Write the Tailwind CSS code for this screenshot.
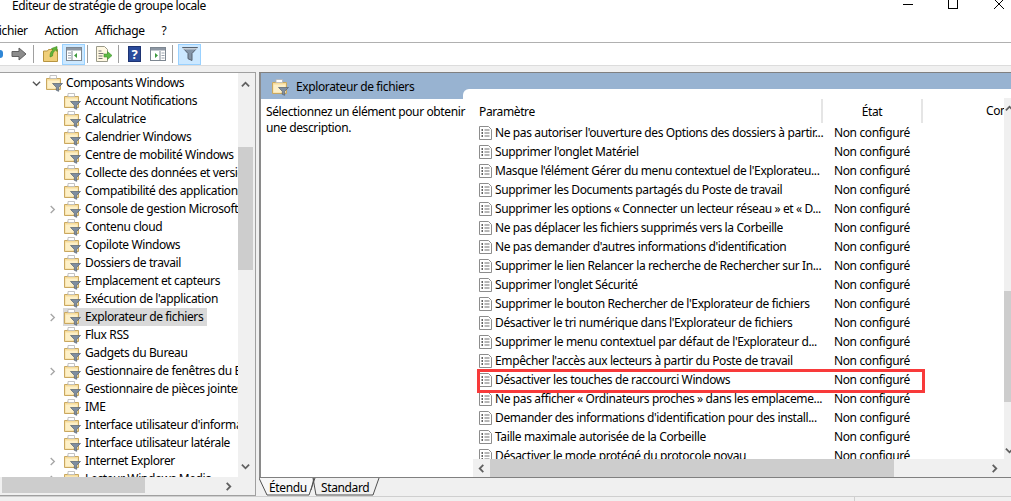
<!DOCTYPE html>
<html lang="fr"><head><meta charset="utf-8"><script src="https://cdn.jsdelivr.net/npm/@tailwindcss/browser@4"></script><title>Éditeur de stratégie de groupe locale</title></head>
<body class="relative w-[1011px] h-[501px] overflow-hidden bg-white font-['Noto_Sans',sans-serif] text-[12px] text-black tracking-[-0.38px]">
<svg class="hidden"><defs>
<symbol id="ff" viewBox="0 0 18 18"><path d="M1.500 4.500h3l1-1.500h5l1 1.500h4v11h-14z" fill="#f7dc9a" stroke="#c9a860"/><path d="M2.500 6.500h12v8h-12z" fill="#fdf0c8"/><path d="M5 1.500h6.500v3h-6.500z" fill="#fff" stroke="#b5b5b5" stroke-width=".8"/><path d="M7.500 9.500h10l-3.800 3.800v4l-2.400-1v-3z" fill="#7f8ea0" stroke="#56616f" stroke-width=".7"/></symbol>
<symbol id="doc" viewBox="0 0 13 14"><path d="M.5.500h9l3 3v10h-12z" fill="#fff" stroke="#8d8d8d"/><path d="M2.500 4h1.500M2.500 7h1.500M2.500 10h1.500" stroke="#2f2f2f" stroke-width="1.500"/><path d="M5.500 4h5M5.500 7h5M5.500 10h5" stroke="#6f6f6f"/></symbol>
<symbol id="cr" viewBox="0 0 10 10"><path d="M3 1l4 4-4 4" fill="none" stroke="#a6a6a6" stroke-width="1.500"/></symbol>
<symbol id="sb" viewBox="0 0 10 10"><path d="M1 7l4-4 4 4" fill="none" stroke="#606060" stroke-width="2"/></symbol>
</defs></svg>

<header class="h-[20px] relative">
  <div class="h-[11px] flex items-center pl-[12px]">
    <span class="whitespace-nowrap">Éditeur de stratégie de groupe locale</span>
    <div class="ml-auto flex items-center h-[11px]">
      <span class="w-[10px] h-px bg-black mr-[35px] -mt-[2px]"></span>
      <span class="w-[10px] h-[14px] border border-black -mt-[7px] mr-[36px]"></span>
      <svg class="w-[10px] h-[10px] mr-[7px] -mt-[3px]" viewBox="0 0 10 10"><path d="M0 0l10 10M10 0l-10 10" stroke="#000"/></svg>
    </div>
  </div>
</header>

<nav class="h-[23px] flex items-center gap-[17px] -ml-[7px] border-b border-[#b0b0b0]"><span>Fichier</span><span>Action</span><span>Affichage</span><span>?</span></nav>

<div class="h-[23px] flex items-center border-b border-[#dcdcdc]">
  <div class="w-[3px] h-[8px] bg-[#2f86d6] rounded-r-full ml-0 mr-[8px]"></div>
  <svg class="w-[16px] h-[14px] mr-[6px]" viewBox="0 0 16 14"><path d="M1 4.500h7v-3.500l7 6-7 6v-3.500h-7z" fill="#8c8c8c" stroke="#5f5f5f"/></svg>
  <span class="w-px h-[18px] bg-[#a0a0a0] mr-[9px]"></span>
  <svg class="w-[15px] h-[16px] mr-[4px]" viewBox="0 0 15 16"><path d="M.5 5h4l1-1.500h9v12h-14z" fill="#f0cf79" stroke="#b79440"/><path d="M7 11c0-4 1-6 3-7l-1.500-1.500 5.500-2v5l-1.500-1.500c-1.500 1-3 3-3 6z" fill="#61b53a" stroke="#3f8a25" stroke-width=".6"/></svg>
  <div class="w-[23px] h-[21px] bg-[#cce8ff] border border-[#99d1ff] flex items-center justify-center mr-[2px]">
    <svg class="w-[16px] h-[14px]" viewBox="0 0 16 14"><rect x=".5" y=".5" width="15" height="13" fill="#fff" stroke="#7d8791"/><path d="M1 1h14v2.500h-14z" fill="#8d97a3"/><path d="M6 4v9" stroke="#7d8791"/><path d="M2 6h3M2 8.500h3M2 11h3" stroke="#9aa3ad"/><path d="M11 6v5l-3-2.500z" fill="#3d9a3d"/></svg>
  </div>
  <span class="w-px h-[18px] bg-[#a0a0a0] mr-[8px]"></span>
  <svg class="w-[16px] h-[16px] mr-[6px]" viewBox="0 0 16 16"><path d="M.5.500h8l3 3v12h-11z" fill="#fff8e2" stroke="#9a9a8a"/><path d="M2.500 5h3M2.500 7.500h5M2.500 10h4M2.500 12.500h4" stroke="#777"/><path d="M8 8h3.500v-2.500l4.500 4-4.500 4v-2.500h-3.500z" fill="#5dbb46" stroke="#3f8f2c" stroke-width=".6"/></svg>
  <span class="w-px h-[18px] bg-[#a0a0a0] mr-[9px]"></span>
  <div class="w-[13px] h-[16px] bg-[#2a4b9b] border border-[#1d3372] text-white text-[13px] font-bold leading-[14px] text-center mr-[9px] tracking-normal">?</div>
  <svg class="w-[16px] h-[14px] mr-[6px]" viewBox="0 0 16 14"><rect x=".5" y=".5" width="15" height="13" fill="#fff" stroke="#7d8791"/><path d="M1 1h14v2.500h-14z" fill="#8d97a3"/><path d="M10 4v9" stroke="#7d8791"/><path d="M11.500 6h3M11.500 8.500h3M11.500 11h3" stroke="#9aa3ad"/><path d="M5 6v5l3-2.500z" fill="#3d9a3d"/></svg>
  <span class="w-px h-[18px] bg-[#a0a0a0] mr-[5px]"></span>
  <div class="w-[23px] h-[21px] bg-[#cce8ff] border border-[#99d1ff] flex items-center justify-center">
    <svg class="w-[16px] h-[16px]" viewBox="0 0 16 16"><path d="M.5 1.500h15l-5.500 6v7l-4-1.800v-5.200z" fill="#8494a6" stroke="#56616f"/><path d="M1 2h14v1.500h-14z" fill="#c5ced8"/></svg>
  </div>
</div>

<div class="h-[6px] bg-[#f0f0f0]"></div>

<main class="h-[424px] bg-[#f0f0f0] flex">
  <section class="w-[256px] h-[424px] border-t border-r border-b border-[#a0a0a0] flex flex-col shrink-0">
    <div class="flex h-[404px]">
      <ul class="w-[238px] bg-white overflow-hidden pt-px leading-[18px] whitespace-nowrap">
        <li class="h-[18px] flex items-center pl-[32px]"><svg class="w-[9px] h-[9px] mr-[4px]" viewBox="0 0 10 10"><path d="M1 3l4 4 4-4" fill="none" stroke="#555" stroke-width="1.500"/></svg><svg class="w-[18px] h-[18px] mr-[3px]"><use href="#ff"/></svg>Composants Windows</li>
        <li class="h-[18px] flex items-center pl-[63px]"><svg class="w-[18px] h-[18px] mr-[4px] shrink-0"><use href="#ff"/></svg>Account Notifications</li>
        <li class="h-[18px] flex items-center pl-[63px]"><svg class="w-[18px] h-[18px] mr-[4px] shrink-0"><use href="#ff"/></svg>Calculatrice</li>
        <li class="h-[18px] flex items-center pl-[63px]"><svg class="w-[18px] h-[18px] mr-[4px] shrink-0"><use href="#ff"/></svg>Calendrier Windows</li>
        <li class="h-[18px] flex items-center pl-[63px]"><svg class="w-[18px] h-[18px] mr-[4px] shrink-0"><use href="#ff"/></svg>Centre de mobilité Windows</li>
        <li class="h-[18px] flex items-center pl-[63px]"><svg class="w-[18px] h-[18px] mr-[4px] shrink-0"><use href="#ff"/></svg>Collecte des données et versions</li>
        <li class="h-[18px] flex items-center pl-[63px]"><svg class="w-[18px] h-[18px] mr-[4px] shrink-0"><use href="#ff"/></svg>Compatibilité des applications</li>
        <li class="h-[18px] flex items-center pl-[48px]"><svg class="w-[9px] h-[9px] mr-[6px] shrink-0"><use href="#cr"/></svg><svg class="w-[18px] h-[18px] mr-[4px] shrink-0"><use href="#ff"/></svg>Console de gestion Microsoft</li>
        <li class="h-[18px] flex items-center pl-[63px]"><svg class="w-[18px] h-[18px] mr-[4px] shrink-0"><use href="#ff"/></svg>Contenu cloud</li>
        <li class="h-[18px] flex items-center pl-[63px]"><svg class="w-[18px] h-[18px] mr-[4px] shrink-0"><use href="#ff"/></svg>Copilote Windows</li>
        <li class="h-[18px] flex items-center pl-[63px]"><svg class="w-[18px] h-[18px] mr-[4px] shrink-0"><use href="#ff"/></svg>Dossiers de travail</li>
        <li class="h-[18px] flex items-center pl-[63px]"><svg class="w-[18px] h-[18px] mr-[4px] shrink-0"><use href="#ff"/></svg>Emplacement et capteurs</li>
        <li class="h-[18px] flex items-center pl-[63px]"><svg class="w-[18px] h-[18px] mr-[4px] shrink-0"><use href="#ff"/></svg>Exécution de l'application</li>
        <li class="h-[18px] flex items-center pl-[48px]"><svg class="w-[9px] h-[9px] mr-[6px] shrink-0"><use href="#cr"/></svg><svg class="w-[18px] h-[18px] shrink-0 bg-[#d9d9d9]"><use href="#ff"/></svg><span class="bg-[#d9d9d9] pl-[4px] pr-[4px] h-[18px]">Explorateur de fichiers</span></li>
        <li class="h-[18px] flex items-center pl-[63px]"><svg class="w-[18px] h-[18px] mr-[4px] shrink-0"><use href="#ff"/></svg>Flux RSS</li>
        <li class="h-[18px] flex items-center pl-[63px]"><svg class="w-[18px] h-[18px] mr-[4px] shrink-0"><use href="#ff"/></svg>Gadgets du Bureau</li>
        <li class="h-[18px] flex items-center pl-[48px]"><svg class="w-[9px] h-[9px] mr-[6px] shrink-0"><use href="#cr"/></svg><svg class="w-[18px] h-[18px] mr-[4px] shrink-0"><use href="#ff"/></svg>Gestionnaire de fenêtres du Bureau</li>
        <li class="h-[18px] flex items-center pl-[63px]"><svg class="w-[18px] h-[18px] mr-[4px] shrink-0"><use href="#ff"/></svg>Gestionnaire de pièces jointes</li>
        <li class="h-[18px] flex items-center pl-[63px]"><svg class="w-[18px] h-[18px] mr-[4px] shrink-0"><use href="#ff"/></svg>IME</li>
        <li class="h-[18px] flex items-center pl-[63px]"><svg class="w-[18px] h-[18px] mr-[4px] shrink-0"><use href="#ff"/></svg>Interface utilisateur d'information</li>
        <li class="h-[18px] flex items-center pl-[63px]"><svg class="w-[18px] h-[18px] mr-[4px] shrink-0"><use href="#ff"/></svg>Interface utilisateur latérale</li>
        <li class="h-[18px] flex items-center pl-[48px]"><svg class="w-[9px] h-[9px] mr-[6px] shrink-0"><use href="#cr"/></svg><svg class="w-[18px] h-[18px] mr-[4px] shrink-0"><use href="#ff"/></svg>Internet Explorer</li>
        <li class="h-[18px] flex items-center pl-[48px]"><svg class="w-[9px] h-[9px] mr-[6px] shrink-0"><use href="#cr"/></svg><svg class="w-[18px] h-[18px] mr-[4px] shrink-0"><use href="#ff"/></svg>Lecteur Windows Media</li>
      </ul>
      <div class="w-[17px] flex flex-col items-center pt-[7px] relative">
        <svg class="w-[9px] h-[9px] mr-[2px]"><use href="#sb"/></svg>
        <div class="w-[15px] h-[123px] bg-[#cdcdcd] mt-[58px] mr-[2px]"></div>
        <svg class="w-[9px] h-[9px] mr-[2px] rotate-180 mt-[192px]"><use href="#sb"/></svg>
      </div>
    </div>
    <div class="h-[18px] flex items-center">
      <div class="w-[143px] h-[16px] self-start ml-[2px] bg-[#cdcdcd]"></div>
      <svg class="w-[9px] h-[9px] ml-[79px] rotate-90"><use href="#sb"/></svg>
    </div>
  </section>

  <div class="w-[3px] shrink-0"></div>

  <section class="flex-1 min-w-0 h-[424px] flex flex-col relative">
    <div class="h-px bg-[#808080]"></div>
    <div class="h-[404px] flex border-l-2 border-[#8a8a8a]">
      <div class="w-[202px] shrink-0 bg-white">
        <div class="h-[26px] bg-[#98b3d1] flex items-center pl-[10px] pt-px"><svg class="w-[18px] h-[18px] mr-[7px]"><use href="#ff"/></svg>Explorateur de fichiers</div>
        <p class="pl-[5px] pt-[5px] leading-[16px] w-[205px] relative">Sélectionnez un élément pour obtenir une description.</p>
      </div>
      <div class="flex-1 min-w-0 bg-[#98b3d1] pt-[16px] flex flex-col">
        <div class="flex-1 bg-white rounded-tl-[6px] flex flex-col min-h-0">
          <div class="flex h-[370px] min-h-0">
            <div class="flex-1 min-w-0 pt-[10px] overflow-hidden">
              <div class="flex h-[24px] items-center">
                <span class="w-[360px] pl-[16px] border-r-2 border-[#e5e5e5] h-[24px] leading-[25px] shrink-0">Paramètre</span>
                <span class="w-[100px] text-center border-r-2 border-[#e5e5e5] h-[24px] leading-[25px] shrink-0">État</span>
                <span class="pl-[63px] shrink-0 whitespace-nowrap">Commentaire</span>
              </div>
              <ul class="whitespace-nowrap">
                <li class="h-[19px] flex items-center pl-[16px]"><svg class="w-[13px] h-[14px] mr-[3px] shrink-0"><use href="#doc"/></svg><span class="w-[339px] shrink-0">Ne pas autoriser l'ouverture des Options des dossiers à partir...</span>Non configuré</li>
                <li class="h-[19px] flex items-center pl-[16px]"><svg class="w-[13px] h-[14px] mr-[3px] shrink-0"><use href="#doc"/></svg><span class="w-[339px] shrink-0">Supprimer l'onglet Matériel</span>Non configuré</li>
                <li class="h-[19px] flex items-center pl-[16px]"><svg class="w-[13px] h-[14px] mr-[3px] shrink-0"><use href="#doc"/></svg><span class="w-[339px] shrink-0">Masque l'élément Gérer du menu contextuel de l'Explorateu...</span>Non configuré</li>
                <li class="h-[19px] flex items-center pl-[16px]"><svg class="w-[13px] h-[14px] mr-[3px] shrink-0"><use href="#doc"/></svg><span class="w-[339px] shrink-0">Supprimer les Documents partagés du Poste de travail</span>Non configuré</li>
                <li class="h-[19px] flex items-center pl-[16px]"><svg class="w-[13px] h-[14px] mr-[3px] shrink-0"><use href="#doc"/></svg><span class="w-[339px] shrink-0">Supprimer les options « Connecter un lecteur réseau » et « D...</span>Non configuré</li>
                <li class="h-[19px] flex items-center pl-[16px]"><svg class="w-[13px] h-[14px] mr-[3px] shrink-0"><use href="#doc"/></svg><span class="w-[339px] shrink-0">Ne pas déplacer les fichiers supprimés vers la Corbeille</span>Non configuré</li>
                <li class="h-[19px] flex items-center pl-[16px]"><svg class="w-[13px] h-[14px] mr-[3px] shrink-0"><use href="#doc"/></svg><span class="w-[339px] shrink-0">Ne pas demander d'autres informations d'identification</span>Non configuré</li>
                <li class="h-[19px] flex items-center pl-[16px]"><svg class="w-[13px] h-[14px] mr-[3px] shrink-0"><use href="#doc"/></svg><span class="w-[339px] shrink-0">Supprimer le lien Relancer la recherche de Rechercher sur In...</span>Non configuré</li>
                <li class="h-[19px] flex items-center pl-[16px]"><svg class="w-[13px] h-[14px] mr-[3px] shrink-0"><use href="#doc"/></svg><span class="w-[339px] shrink-0">Supprimer l'onglet Sécurité</span>Non configuré</li>
                <li class="h-[19px] flex items-center pl-[16px]"><svg class="w-[13px] h-[14px] mr-[3px] shrink-0"><use href="#doc"/></svg><span class="w-[339px] shrink-0">Supprimer le bouton Rechercher de l'Explorateur de fichiers</span>Non configuré</li>
                <li class="h-[19px] flex items-center pl-[16px]"><svg class="w-[13px] h-[14px] mr-[3px] shrink-0"><use href="#doc"/></svg><span class="w-[339px] shrink-0">Désactiver le tri numérique dans l'Explorateur de fichiers</span>Non configuré</li>
                <li class="h-[19px] flex items-center pl-[16px]"><svg class="w-[13px] h-[14px] mr-[3px] shrink-0"><use href="#doc"/></svg><span class="w-[339px] shrink-0">Supprimer le menu contextuel par défaut de l'Explorateur d...</span>Non configuré</li>
                <li class="h-[19px] flex items-center pl-[16px]"><svg class="w-[13px] h-[14px] mr-[3px] shrink-0"><use href="#doc"/></svg><span class="w-[339px] shrink-0">Empêcher l'accès aux lecteurs à partir du Poste de travail</span>Non configuré</li>
                <li class="h-[19px] flex items-center pl-[16px]"><svg class="w-[13px] h-[14px] mr-[3px] shrink-0"><use href="#doc"/></svg><span class="w-[339px] shrink-0">Désactiver les touches de raccourci Windows</span>Non configuré</li>
                <li class="h-[19px] flex items-center pl-[16px]"><svg class="w-[13px] h-[14px] mr-[3px] shrink-0"><use href="#doc"/></svg><span class="w-[339px] shrink-0">Ne pas afficher « Ordinateurs proches » dans les emplaceme...</span>Non configuré</li>
                <li class="h-[19px] flex items-center pl-[16px]"><svg class="w-[13px] h-[14px] mr-[3px] shrink-0"><use href="#doc"/></svg><span class="w-[339px] shrink-0">Demander des informations d'identification pour des install...</span>Non configuré</li>
                <li class="h-[19px] flex items-center pl-[16px]"><svg class="w-[13px] h-[14px] mr-[3px] shrink-0"><use href="#doc"/></svg><span class="w-[339px] shrink-0">Taille maximale autorisée de la Corbeille</span>Non configuré</li>
                <li class="h-[19px] flex items-center pl-[16px]"><svg class="w-[13px] h-[14px] mr-[3px] shrink-0"><use href="#doc"/></svg><span class="w-[339px] shrink-0">Désactiver le mode protégé du protocole noyau</span>Non configuré</li>
              </ul>
            </div>
            <div class="w-[7px] shrink-0 flex flex-col bg-[#f0f0f0] mt-[9px] overflow-hidden">
              <svg class="w-[9px] h-[9px] mt-[6px] ml-px shrink-0"><use href="#sb"/></svg>
              <div class="h-[111px] bg-[#cdcdcd] mt-[178px] shrink-0"></div>
              <svg class="w-[9px] h-[9px] mt-[44px] ml-px rotate-180 shrink-0"><use href="#sb"/></svg>
            </div>
          </div>
          <div class="h-[18px] bg-white pl-[10px]">
            <div class="h-[18px] bg-[#f0f0f0] flex items-center">
              <svg class="w-[9px] h-[9px] ml-[4px] -rotate-90 shrink-0"><use href="#sb"/></svg>
              <div class="w-[404px] h-[18px] ml-[4px] bg-[#cdcdcd]"></div>
              <svg class="w-[9px] h-[9px] ml-[96px] rotate-90 shrink-0"><use href="#sb"/></svg>
            </div>
          </div>
        </div>
      </div>
    </div>
    <div class="h-px bg-[#808080]"></div>
    <div class="h-[18px] relative flex">
      <svg class="absolute left-0 top-0 w-[130px] h-[18px]" viewBox="0 0 130 18"><path d="M0 0l8 17h42l6-17" fill="#f7f7f7" stroke="#505050"/><path d="M52 12l3-12M57 17l-3-17M57 17h57l6-17" fill="none" stroke="#505050"/></svg>
      <span class="absolute left-[10px] top-0 leading-[19px]">Étendu</span>
      <span class="absolute left-[62px] top-0 leading-[19px]">Standard</span>
    </div>
  </section>
</main>

<footer class="h-[5px] bg-[#f0f0f0] border-t border-[#cfcfcf] flex"><span class="ml-[854px] w-px h-[5px] bg-[#cfcfcf]"></span></footer>

<div class="absolute left-[477px] top-[369px] w-[448px] h-[24px] border-[3px] border-[#f83a3a]"></div>
</body></html>
